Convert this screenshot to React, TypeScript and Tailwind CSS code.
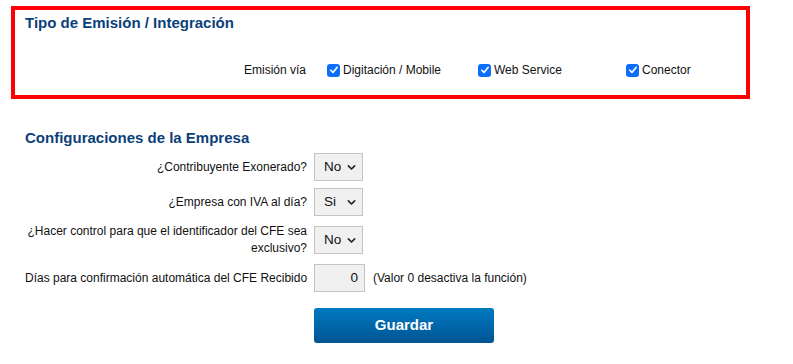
import React from 'react'

const font = { fontFamily: '"Liberation Sans", Arial, sans-serif' }

function Check({ label }: { label: string }) {
  return (
    <label className="flex items-center gap-[3px] text-[12px] text-[#111]">
      <span className="w-[13px] h-[13px] rounded-[3px] bg-[#0d6efd] flex items-center justify-center">
        <svg viewBox="0 0 12 12" className="w-[10px] h-[10px]">
          <path d="M2.2 6.3 L4.8 8.9 L9.8 2.8" fill="none" stroke="white" strokeWidth="2" strokeLinecap="round" strokeLinejoin="round" />
        </svg>
      </span>
      {label}
    </label>
  )
}

function Select({ value }: { value: string }) {
  return (
    <div className="w-[49px] h-[28px] border border-[#c4c4c4] bg-[#f0f0f0] flex items-center justify-between pl-[9px] pr-[6px] text-[13.5px] text-[#111]">
      <span>{value}</span>
      <svg viewBox="0 0 10 10" className="w-[9px] h-[9px]">
        <path d="M1.5 3.2 L5 6.7 L8.5 3.2" fill="none" stroke="#222" strokeWidth="1.8" strokeLinecap="round" strokeLinejoin="round" />
      </svg>
    </div>
  )
}

export default function App() {
  return (
    <div className="w-[793px] h-[364px] bg-white text-[#111]" style={font}>
      <div className="pl-[11px] pt-[6px]">
        <div className="w-[739px] h-[93px] border-4 border-[#ff0000] pl-[10px] pt-[4px]">
          <h2 className="text-[15px] font-bold text-[#0b3f7a] leading-[18px]">Tipo de Emisión / Integración</h2>
          <div className="flex items-center mt-[29px]">
            <div className="w-[281px] text-right text-[12px]">Emisión vía</div>
            <div className="ml-[21px] w-[151px]"><Check label="Digitación / Mobile" /></div>
            <div className="w-[148px]"><Check label="Web Service" /></div>
            <div><Check label="Conector" /></div>
          </div>
        </div>
      </div>

      <div className="pl-[25px] pt-[30px]">
        <h2 className="text-[15px] font-bold text-[#0b3f7a] leading-[18px]">Configuraciones de la Empresa</h2>
        <div className="grid grid-cols-[282px_auto] gap-x-[7px] gap-y-[7px] items-center text-[12px] mt-[6px]">
          <div className="text-right">¿Contribuyente Exonerado?</div>
          <Select value="No" />
          <div className="text-right">¿Empresa con IVA al día?</div>
          <Select value="Si" />
          <div className="text-right leading-[17px] h-[34px]">¿Hacer control para que el identificador del CFE sea exclusivo?</div>
          <Select value="No" />
          <div className="text-right whitespace-nowrap">Días para confirmación automática del CFE Recibido</div>
          <div className="flex items-center gap-[8px]">
            <div className="w-[51px] h-[28px] border border-[#c4c4c4] bg-[#f0f0f0] flex items-center justify-end pr-[6px] text-[13.5px]">0</div>
            <span>(Valor 0 desactiva la función)</span>
          </div>
          <div />
          <button className="mt-[9px] w-[180px] h-[35px] rounded-[3px] bg-gradient-to-b from-[#0079c0] to-[#005594] text-white font-bold text-[15px]">Guardar</button>
        </div>
      </div>
    </div>
  )
}
